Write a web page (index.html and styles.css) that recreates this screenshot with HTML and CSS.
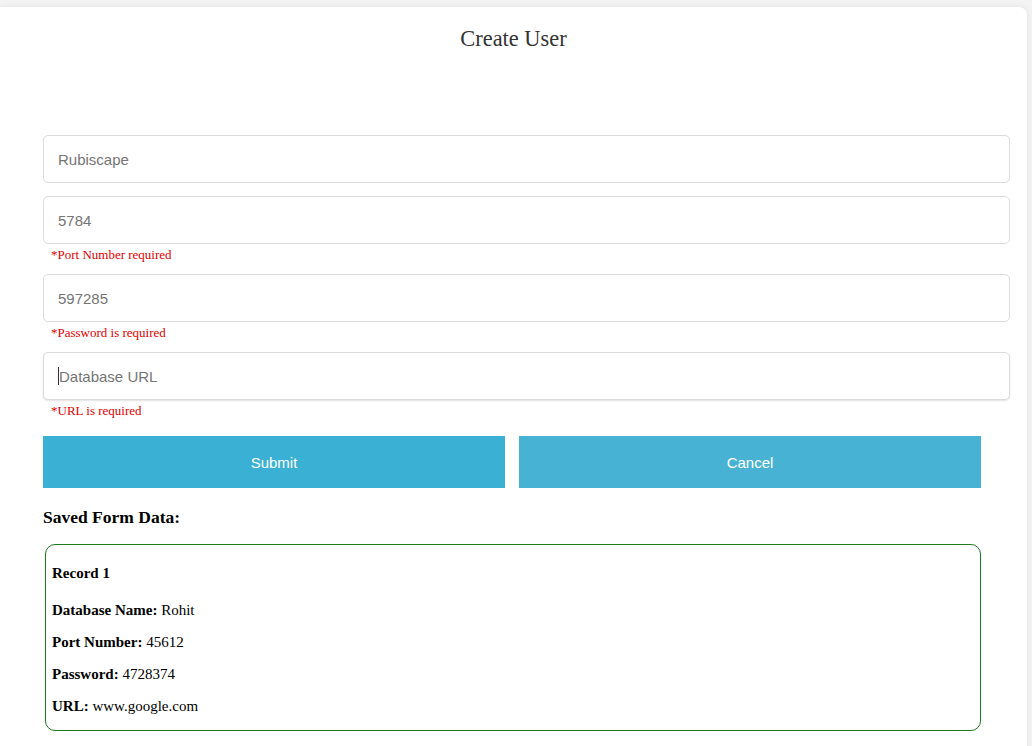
FILE: index.html
```html
<!DOCTYPE html>
<html>
<head>
<meta charset="utf-8">
<link rel="stylesheet" href="styles.css">
</head>
<body>
<div class="card">
  <h2 class="title">Create User</h2>
  <form class="form">
    <div class="field"><input class="input" type="text" placeholder="Rubiscape"></div>
    <div class="field"><input class="input" type="text" placeholder="5784"><div class="error">*Port Number required</div></div>
    <div class="field"><input class="input" type="text" placeholder="597285"><div class="error">*Password is required</div></div>
    <div class="field"><div class="input focus"><span class="caret"></span>Database URL</div><div class="error">*URL is required</div></div>
    <div class="buttons">
      <button type="button" class="btn submit">Submit</button>
      <button type="button" class="btn cancel">Cancel</button>
    </div>
  </form>
  <h3 class="saved">Saved Form Data:</h3>
  <div class="record">
    <h4 class="rec-title">Record 1</h4>
    <p><b>Database Name:</b> Rohit</p>
    <p><b>Port Number:</b> 45612</p>
    <p><b>Password:</b> 4728374</p>
    <p><b>URL:</b> www.google.com</p>
  </div>
</div>
</body>
</html>
```
FILE: styles.css
```css
html, body {
  margin: 0;
  padding: 0;
  background: #f3f3f3;
  height: 100%;
  overflow: hidden;
}
body {
  font-family: "Liberation Serif", "Times New Roman", serif;
  color: #000;
}
.card {
  background: #fff;
  margin: 7px 5px 0 0;
  border-radius: 0 8px 0 0;
  box-shadow: 0 0 6px rgba(0,0,0,0.08);
  padding: 0 0 20px 0;
  min-height: 760px;
}
.title {
  margin: 0;
  padding-top: 19px;
  text-align: center;
  font-weight: normal;
  font-size: 22.4px;
  line-height: 25px;
  color: #333;
}
.form {
  margin-top: 84px;
  padding: 0 17px 0 43px;
}
.field {
  display: flex;
  flex-direction: column;
  margin-bottom: 13px;
}
.input {
  box-sizing: border-box;
  width: 100%;
  height: 48px;
  border: 1px solid #dcdcdc;
  border-radius: 5px;
  padding: 0 14px;
  font-family: "Liberation Sans", Arial, sans-serif;
  font-size: 15px;
  color: #757575;
  outline: none;
  background: #fff;
}
.input::placeholder { color: #757575; }
.focus {
  display: flex;
  align-items: center;
  box-shadow: 0 1px 2px rgba(0,0,0,0.12);
}
.caret {
  display: inline-block;
  width: 1px;
  height: 18px;
  background: #333;
}
.error {
  color: #e00000;
  font-size: 13px;
  line-height: 15px;
  padding-left: 8px;
  margin-top: 3px;
  margin-bottom: -1px;
}
.buttons {
  display: flex;
  gap: 14px;
  width: 938px;
  margin-top: 19px;
}
.btn {
  flex: 1;
  height: 52px;
  border: none;
  color: #fff;
  font-family: "Liberation Sans", Arial, sans-serif;
  font-size: 15px;
  cursor: pointer;
}
.submit { background: #3bb0d5; }
.cancel { background: #48b2d5; }
.saved {
  margin: 19px 0 0 43px;
  font-size: 17.5px;
  line-height: 20px;
}
.record {
  margin: 17px 0 0 45px;
  width: 936px;
  box-sizing: border-box;
  border: 1px solid #1d7a1d;
  border-radius: 10px;
  padding: 0 6px;
  font-size: 15px;
}
.rec-title {
  margin: 20px 0;
  font-size: 15px;
  line-height: 17px;
}
.record p {
  margin: 15px 0;
  line-height: 17px;
}
```
